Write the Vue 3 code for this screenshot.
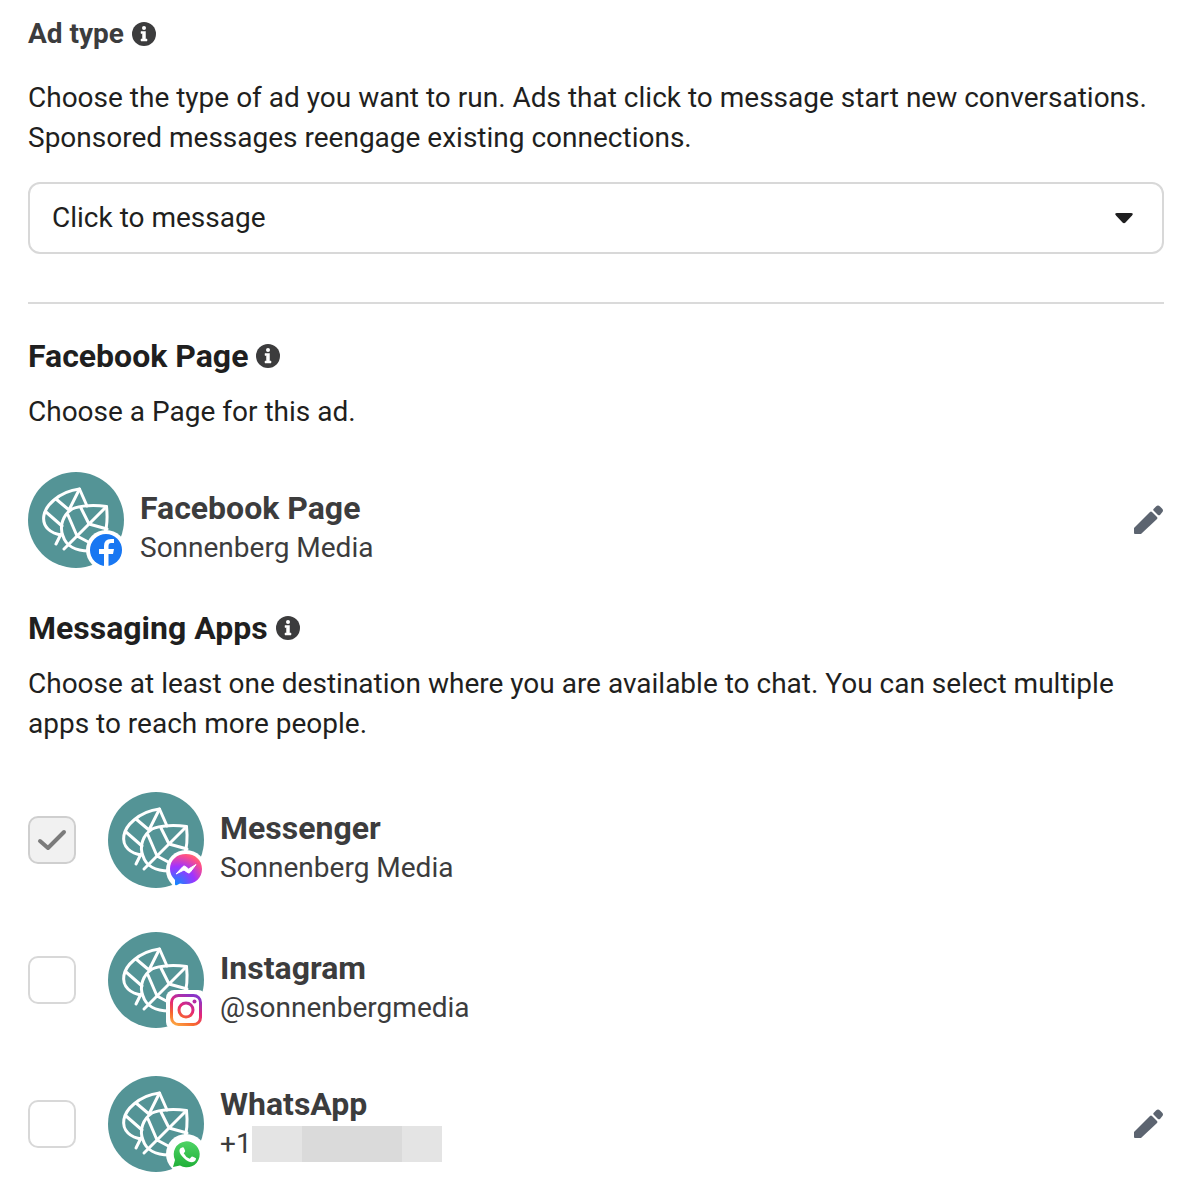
<script setup>
import { ref } from 'vue'

const adType = ref('message')
const apps = ref([
  { id: 'messenger', name: 'Messenger', account: 'Sonnenberg Media', checked: true, locked: true },
  { id: 'instagram', name: 'Instagram', account: '@sonnenbergmedia', checked: false },
  { id: 'whatsapp', name: 'WhatsApp', account: '+1', checked: false, masked: true, editable: true }
])
</script>

<template>
  <svg class="defs" width="0" height="0" aria-hidden="true">
    <defs>
      <radialGradient id="messenger-fill" cx="0.2" cy="1" r="1.1">
        <stop offset="0" stop-color="#0a8cff" />
        <stop offset="0.55" stop-color="#a033ff" />
        <stop offset="0.9" stop-color="#ff4f86" />
        <stop offset="1" stop-color="#ff6b70" />
      </radialGradient>
      <linearGradient id="instagram-fill" x1="66" y1="94" x2="82" y2="62" gradientUnits="userSpaceOnUse">
        <stop offset="0" stop-color="#fdb045" />
        <stop offset="0.3" stop-color="#f7652f" />
        <stop offset="0.6" stop-color="#e3257a" />
        <stop offset="1" stop-color="#8a35c8" />
      </linearGradient>
      <linearGradient id="whatsapp-fill" x1="0" y1="0" x2="0" y2="1">
        <stop offset="0" stop-color="#4fd365" />
        <stop offset="1" stop-color="#20b038" />
      </linearGradient>
      <symbol id="info" viewBox="0 0 24 24">
        <circle cx="12" cy="12" r="12" fill="#3c3c3d" />
        <circle cx="12" cy="6" r="2" fill="#fff" />
        <path d="M9 9.500h4.500v7.500h1.500v2H9v-2h1.500v-5.500H9z" fill="#fff" stroke="#fff" stroke-width="0.500" />
      </symbol>
      <symbol id="pencil" viewBox="0 0 32 32">
        <path d="M2 24 18 8q1-1 2 0l5 5q1 1 0 2L9 30H3q-1 0-1-1z" fill="#5c6470" />
        <path d="M21.500 5 24 2.500q2-2 4 0l2 2q2 2 0 4L28 11q-1 .5-2 0L21.500 6.500q-.5-1 0-1.500z" fill="#5c6470" />
      </symbol>
      <symbol id="leaves" viewBox="0 0 96 96">
        <circle cx="48" cy="48" r="48" fill="#549496" />
        <g fill="none" stroke="#fff" stroke-width="3" stroke-linecap="round" stroke-linejoin="round">
          <path d="M59 34 51.500 17C43 18 33 22 26 28C14 38 13 50 20 57Q25 62 34 63" />
          <path d="M51.500 17 41 38M28 27 41 38M18 40 34 54M28 72 33 62" />
          <path d="M78.500 34.500C68 33 52 33 44 37C35 43 31 54 35 64C38 74 48 79 61 79C75 76 81 58 78.500 34.500Z" />
          <path d="M78.500 34.500 36 77M53 36 61 52 79 57M40 43 49 64 64 72" />
        </g>
      </symbol>
    </defs>
  </svg>

  <main class="panel">
    <section class="ad-type">
      <label class="small-heading" for="ad-type">
        Ad type
        <svg class="info"><use href="#info" /></svg>
      </label>
      <p class="ad-copy">
        Choose the type of ad you want to run. Ads that click to message start new conversations.
        Sponsored messages reengage existing connections.
      </p>
      <div class="select-wrap">
        <select id="ad-type" v-model="adType">
          <option value="message">Click to message</option>
          <option value="sponsored">Sponsored message</option>
        </select>
        <svg class="caret" viewBox="0 0 20 12" aria-hidden="true">
          <path d="M3 1h14q3 0 1 2.500L11.500 10.500q-1.500 1.500-3 0L2 3.500Q0 1 3 1z" fill="#1f1f20" />
        </svg>
      </div>
    </section>

    <section class="page">
      <h2>Facebook Page <svg class="info"><use href="#info" /></svg></h2>
      <p>Choose a Page for this ad.</p>
      <div class="row page-row">
        <svg class="avatar" viewBox="0 0 96 96" aria-hidden="true">
          <use href="#leaves" />
          <circle cx="78" cy="78" r="20" fill="#fff" />
          <circle cx="78" cy="78" r="16" fill="#1877f2" />
          <path d="M76 94V82h-5v-5h5v-3q0-7 7-7h3v4h-3q-2.500 0-2.500 3v3h5.500l-1 5h-4.500v12z" fill="#fff" />
        </svg>
        <div class="details">
          <strong>Facebook Page</strong>
          <span>Sonnenberg Media</span>
        </div>
        <button class="edit" type="button" aria-label="Edit Facebook Page">
          <svg><use href="#pencil" /></svg>
        </button>
      </div>
    </section>

    <section class="messaging">
      <h2>Messaging Apps <svg class="info"><use href="#info" /></svg></h2>
      <p>
        Choose at least one destination where you are available to chat. You can select multiple
        apps to reach more people.
      </p>
      <div class="apps">
        <div v-for="app in apps" :key="app.id" class="row" :class="app.id">
          <span class="tick">
            <input :id="app.id" v-model="app.checked" type="checkbox" :disabled="app.locked" />
            <svg v-if="app.checked" viewBox="0 0 48 48" aria-hidden="true">
              <path d="M12 25 20 32 36 16" fill="none" stroke="#7b7b7b" stroke-width="4" stroke-linecap="round" stroke-linejoin="round" />
            </svg>
          </span>
          <svg class="avatar" viewBox="0 0 96 96" aria-hidden="true">
            <use href="#leaves" />
            <g v-if="app.id === 'messenger'">
              <circle cx="78" cy="78" r="20" fill="#fff" />
              <path d="M78 62C69 62 62 68 62 77Q62 83 67 88V92Q67 94 69 93L72 91.500Q75 92 78 92C87 92 94 86 94 77S87 62 78 62z" fill="url(#messenger-fill)" />
              <path d="M68 82 75 74.500Q76 73.500 77.500 74.500L80.500 77 88 72.500 82 80.500Q81 81.500 79.500 80.500L76 78z" fill="#fff" stroke="#fff" stroke-width="1" stroke-linejoin="round" />
            </g>
            <g v-else-if="app.id === 'instagram'">
              <rect x="58" y="58" width="40" height="40" rx="8" fill="#fff" />
              <g fill="none" stroke="url(#instagram-fill)" stroke-width="3">
                <rect x="63.500" y="63.500" width="29" height="29" rx="7" />
                <circle cx="78" cy="78" r="7" />
              </g>
              <circle cx="86.500" cy="69.500" r="2" fill="#b72ba4" />
            </g>
            <g v-else>
              <circle cx="78" cy="78" r="20" fill="#fff" />
              <path d="M65 91 67 84A13 13 0 1 1 72 89.500z" fill="url(#whatsapp-fill)" />
              <path d="M74 71.500q1.500-1 2.200 1l1 2.500q0 1-1.500 2.200 2 4 6 5.500l1.800-2q.5-.5 1.500 0l3 1.500q0 3.500-4 4-4 0-8-4-5-4.500-4.500-8.200 0-2 2.500-2.500z" fill="#fff" />
            </g>
          </svg>
          <label class="details" :for="app.id">
            <strong>{{ app.name }}</strong>
            <span class="account">{{ app.account }}<i v-if="app.masked" class="mask" /></span>
          </label>
          <button v-if="app.editable" class="edit" type="button" :aria-label="'Edit ' + app.name">
            <svg><use href="#pencil" /></svg>
          </button>
        </div>
      </div>
    </section>
  </main>
</template>

<style>
body {
  margin: 0;
  background: #fff;
}
</style>

<style scoped>
.defs {
  position: absolute;
}
.panel {
  padding: 14px 21px 31px 28px;
  font: 28px/40px Roboto, sans-serif;
  color: #1f1f20;
}
p,
h2 {
  margin: 0;
}
.small-heading,
h2 {
  display: flex;
  align-items: center;
  gap: 8px;
  font-weight: 700;
}
.small-heading {
  color: #3c3c3d;
}
h2 {
  font-size: 32px;
  margin-bottom: 16px;
}
.info {
  width: 24px;
  height: 24px;
}
.ad-type {
  padding-bottom: 48px;
  border-bottom: 2px solid #dadada;
}
.ad-copy {
  margin: 24px 0;
}
.select-wrap {
  position: relative;
}
select {
  display: block;
  appearance: none;
  width: 100%;
  height: 72px;
  padding: 0 72px 0 22px;
  border: 2px solid #d8d8d8;
  border-radius: 12px;
  background: #fff;
  color: inherit;
  font: inherit;
}
.caret {
  position: absolute;
  top: 30px;
  right: 30px;
  width: 20px;
  height: 12px;
  pointer-events: none;
}
.page {
  padding: 32px 0 40px;
}
.row {
  display: flex;
  align-items: center;
}
.page-row {
  margin-top: 40px;
}
.avatar {
  flex: none;
  width: 96px;
  height: 96px;
  margin-right: 16px;
  overflow: visible;
}
.details {
  display: flex;
  flex: 1;
  flex-direction: column;
  align-self: flex-end;
  color: #3c3c3d;
}
.details strong {
  font-size: 32px;
}
.whatsapp .details {
  align-self: center;
}
.account {
  display: flex;
  align-items: center;
}
.mask {
  width: 190px;
  height: 36px;
  background: linear-gradient(90deg, #e4e4e4 50px, #dadada 50px 150px, #e4e4e4 150px);
}
.edit {
  width: 32px;
  height: 32px;
  padding: 0;
  border: 0;
  background: none;
  cursor: pointer;
}
.edit svg {
  display: block;
  width: 32px;
  height: 32px;
}
.apps {
  display: flex;
  flex-direction: column;
  gap: 44px;
  margin-top: 48px;
}
.whatsapp {
  margin-top: 4px;
}
.tick {
  position: relative;
  flex: none;
  width: 48px;
  height: 48px;
  margin-right: 32px;
}
.tick input {
  display: block;
  appearance: none;
  box-sizing: border-box;
  width: 48px;
  height: 48px;
  margin: 0;
  border: 2px solid #d8d8d8;
  border-radius: 10px;
  background: #fff;
}
.tick input:disabled {
  border-color: #cfcfcf;
  background: #f1f1f1;
}
.tick svg {
  position: absolute;
  inset: 0;
  pointer-events: none;
}
</style>
